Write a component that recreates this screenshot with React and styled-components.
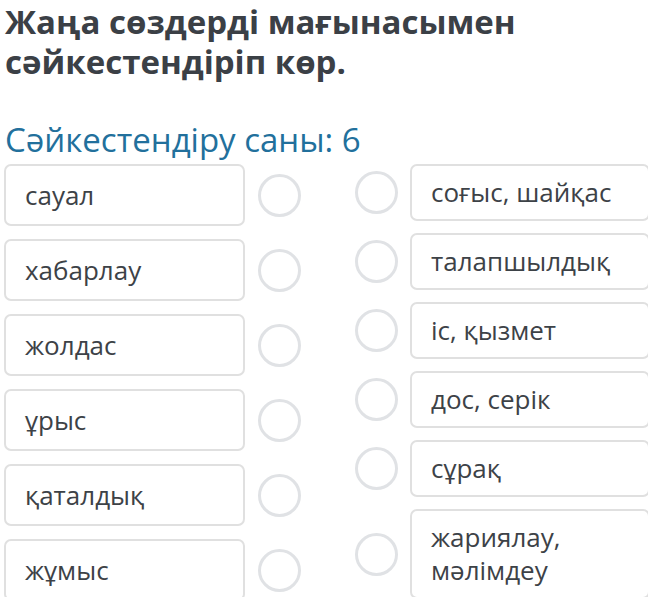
import styled, { createGlobalStyle } from 'styled-components';

const GlobalStyle = createGlobalStyle`
    body {
        margin: 0;
        background: #fff;
        font-family: "Open Sans", "Noto Sans", sans-serif;
        color: #3d4247;
    }
`;

const Page = styled.div`
    width: 648px;
    height: 597px;
    overflow: hidden;
    padding: 0 0 0 5px;
    box-sizing: border-box;
`;

const Title = styled.h1`
    margin: 0;
    padding-top: 2px;
    width: 580px;
    font-size: 33px;
    line-height: 40px;
    font-weight: 700;
    color: #3b4046;
`;

const Count = styled.h2`
    margin: 38px 0 0;
    font-size: 33px;
    line-height: 40px;
    font-weight: 400;
    color: #22709c;
`;

const Board = styled.div`
    display: flex;
    gap: 54px;
    margin-top: 4px;
    margin-left: -1px;
`;

const Column = styled.div`
    display: flex;
    flex-direction: column;
    gap: ${props => props.$gap}px;
`;

const Row = styled.div`
    display: flex;
    align-items: center;
    gap: ${props => props.$gap}px;
`;

const Card = styled.div`
    box-sizing: border-box;
    display: flex;
    align-items: center;
    width: ${props => props.$width}px;
    min-height: ${props => props.$height}px;
    padding: 10px 19px;
    border: 2px solid #e0e0e0;
    border-radius: 7px;
    font-size: 26px;
    line-height: 33px;
    color: #3d4247;
`;

const Dot = styled.span`
    box-sizing: border-box;
    flex: none;
    width: 43px;
    height: 43px;
    border: 3px solid #e0e2e5;
    border-radius: 50%;
`;

const leftWords = ['сауал', 'хабарлау', 'жолдас', 'ұрыс', 'қаталдық', 'жұмыс'];
const rightWords = ['соғыс, шайқас', 'талапшылдық', 'іс, қызмет', 'дос, серік', 'сұрақ', 'жариялау, мәлімдеу'];

export default function App() {
    return (
        <Page>
            <GlobalStyle />
            <Title>Жаңа сөздерді мағынасымен сәйкестендіріп көр.</Title>
            <Count>Сәйкестендіру саны: 6</Count>
            <Board>
                <Column $gap={13}>
                    {leftWords.map(word => (
                        <Row key={word} $gap={13}>
                            <Card $width={241} $height={62}>{word}</Card>
                            <Dot />
                        </Row>
                    ))}
                </Column>
                <Column $gap={12}>
                    {rightWords.map(word => (
                        <Row key={word} $gap={12}>
                            <Dot />
                            <Card $width={240} $height={57}>{word}</Card>
                        </Row>
                    ))}
                </Column>
            </Board>
        </Page>
    );
}
